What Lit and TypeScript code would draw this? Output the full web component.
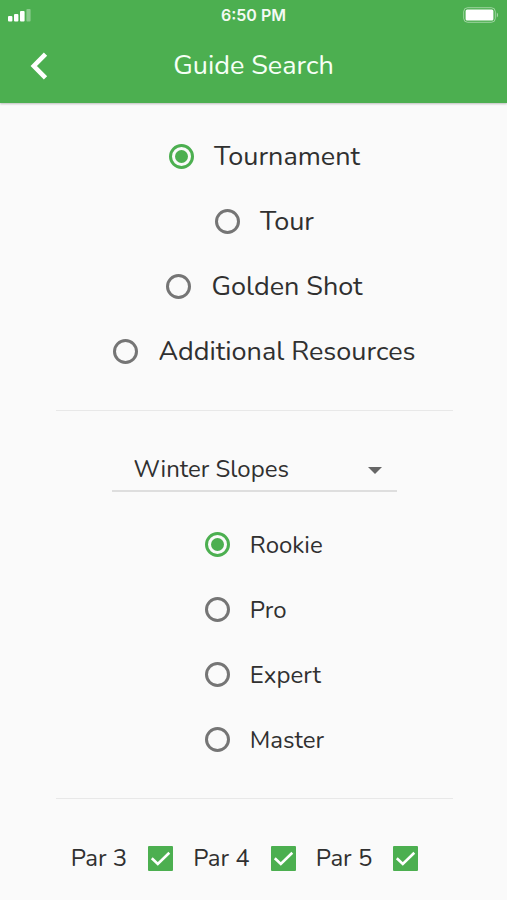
import { LitElement, html, css } from "lit";
import { customElement, state } from "lit/decorators.js";

@customElement("status-bar")
class StatusBar extends LitElement {
  static styles = css`
    :host {
      display: grid;
      grid-template-columns: 1fr auto 1fr;
      align-items: center;
      height: 30px;
      padding: 0 8px;
      color: #f4faf4;
      font: 600 16px/20px Inter, sans-serif;
    }
    .battery {
      justify-self: end;
    }
    svg {
      display: block;
    }
  `;

  render() {
    return html`
      <svg width="23" height="14" viewBox="0 0 23 14" fill="#fff" aria-label="Signal">
        <rect x="0" y="8" width="4.4" height="5.6" rx="1" />
        <rect x="6" y="6" width="4.4" height="7.6" rx="1" />
        <rect x="12" y="3" width="4.6" height="10.6" rx="1" />
        <rect x="18.4" y="1" width="4.2" height="12.6" rx="1" opacity=".35" />
      </svg>
      <span>6:50 PM</span>
      <svg class="battery" width="36" height="16" viewBox="0 0 36 16" aria-label="Battery">
        <rect x="0.7" y="0.7" width="31.6" height="14.6" rx="4" fill="none" stroke="#fff" stroke-opacity=".45" />
        <rect x="2.6" y="2.6" width="27.8" height="10.8" rx="1.5" fill="#fff" />
        <path d="M33.8 5.5c1.6.7 1.6 4.3 0 5z" fill="#fff" opacity=".5" />
      </svg>
    `;
  }
}

@customElement("app-root")
class AppRoot extends LitElement {
  static styles = css`
    :host {
      display: block;
      min-height: 100vh;
      background: #fafafa;
      color: #303030;
      font-family: Nunito, Lato, sans-serif;
    }
    header {
      background: #4caf50;
      box-shadow: 0 1px 2px rgba(0, 0, 0, 0.25);
    }
    .bar {
      display: grid;
      grid-template-columns: 78px 1fr 78px;
      align-items: center;
      height: 71px;
      padding-bottom: 2px;
    }
    .back {
      display: grid;
      place-items: center;
      height: 71px;
      padding: 0;
      border: 0;
      background: none;
    }
    h1 {
      margin: 0;
      color: #f6fff6;
      font-size: 27px;
      line-height: 36px;
      font-weight: 400;
      text-align: center;
    }
    main {
      display: flex;
      flex-direction: column;
      padding: 21px 54px 21px 56px;
    }
    fieldset {
      display: flex;
      flex-direction: column;
      margin: 0;
      padding: 0;
      border: 0;
      min-width: 0;
    }
    .kinds {
      align-items: center;
      font-size: 27px;
    }
    .levels {
      align-self: center;
      margin-top: 20px;
      font-size: 24px;
    }
    .choice {
      display: flex;
      align-items: center;
      gap: 20px;
      height: 65px;
      padding-left: 20px;
    }
    input {
      appearance: none;
      display: grid;
      place-items: center;
      box-sizing: border-box;
      flex: none;
      width: 25px;
      height: 25px;
      margin: 0;
    }
    input[type="radio"] {
      border: 3px solid #757575;
      border-radius: 50%;
    }
    input[type="radio"]:checked {
      border-color: #4caf50;
    }
    input[type="radio"]:checked::before {
      content: "";
      width: 13px;
      height: 13px;
      border-radius: 50%;
      background: #4caf50;
    }
    hr {
      width: 100%;
      height: 1px;
      margin: 26px 0;
      border: 0;
      background: #e8e8e8;
    }
    .course {
      display: grid;
      align-self: center;
      align-items: center;
      width: 72%;
      margin-top: 11px;
    }
    .course select,
    .course svg {
      grid-area: 1 / 1;
    }
    .course svg {
      justify-self: end;
      margin-right: 15px;
      pointer-events: none;
    }
    select {
      appearance: none;
      box-sizing: border-box;
      width: 100%;
      height: 44px;
      padding: 0 40px 0 22px;
      border: 0;
      border-bottom: 2px solid #dedede;
      border-radius: 0;
      background: none;
      color: inherit;
      font: inherit;
      font-size: 24px;
    }
    .pars {
      flex-direction: row;
      justify-content: center;
      margin-top: 6px;
      font-size: 24px;
    }
    .par {
      display: flex;
      align-items: center;
      gap: 21px;
      height: 54px;
      padding-right: 20px;
    }
    .tick {
      display: grid;
    }
    .tick input,
    .tick svg {
      grid-area: 1 / 1;
    }
    .tick input {
      border: 3px solid #757575;
      border-radius: 1px;
    }
    .tick input:checked {
      border: 0;
      background: #4caf50;
    }
    .tick svg {
      pointer-events: none;
    }
  `;

  @state() kind = "Tournament";
  @state() level = "Rookie";

  choice(group: "kind" | "level", name: string) {
    return html`<label class="choice">
      <input
        type="radio"
        name=${group}
        .checked=${this[group] === name}
        @change=${() => (this[group] = name)}
      />
      <span>${name}</span>
    </label>`;
  }

  render() {
    return html`
      <header>
        <status-bar></status-bar>
        <div class="bar">
          <button class="back" aria-label="Back">
            <svg width="18" height="28" viewBox="0 0 18 28" fill="none" stroke="#fff" stroke-width="4.6">
              <path d="M15.5 2.2 3.8 14 15.5 25.8" />
            </svg>
          </button>
          <h1>Guide Search</h1>
        </div>
      </header>
      <main>
        <fieldset class="kinds" aria-label="Guide type">
          ${["Tournament", "Tour", "Golden Shot", "Additional Resources"].map((n) => this.choice("kind", n))}
        </fieldset>
        <hr />
        <div class="course">
          <select aria-label="Course">
            <option>Winter Slopes</option>
          </select>
          <svg width="14" height="7" viewBox="0 0 14 7"><path d="M0 0h14L7 7z" fill="#666" /></svg>
        </div>
        <fieldset class="levels" aria-label="Level">
          ${["Rookie", "Pro", "Expert", "Master"].map((n) => this.choice("level", n))}
        </fieldset>
        <hr />
        <fieldset class="pars" aria-label="Par">
          ${[3, 4, 5].map(
            (n) => html`<label class="par">
              <span>Par ${n}</span>
              <span class="tick">
                <input type="checkbox" checked />
                <svg width="25" height="25" viewBox="0 0 25 25" fill="none" stroke="#fff" stroke-width="2.6">
                  <path d="M3.8 12.2 9.8 18 21.3 6.8" />
                </svg>
              </span>
            </label>`
          )}
        </fieldset>
      </main>
    `;
  }
}
